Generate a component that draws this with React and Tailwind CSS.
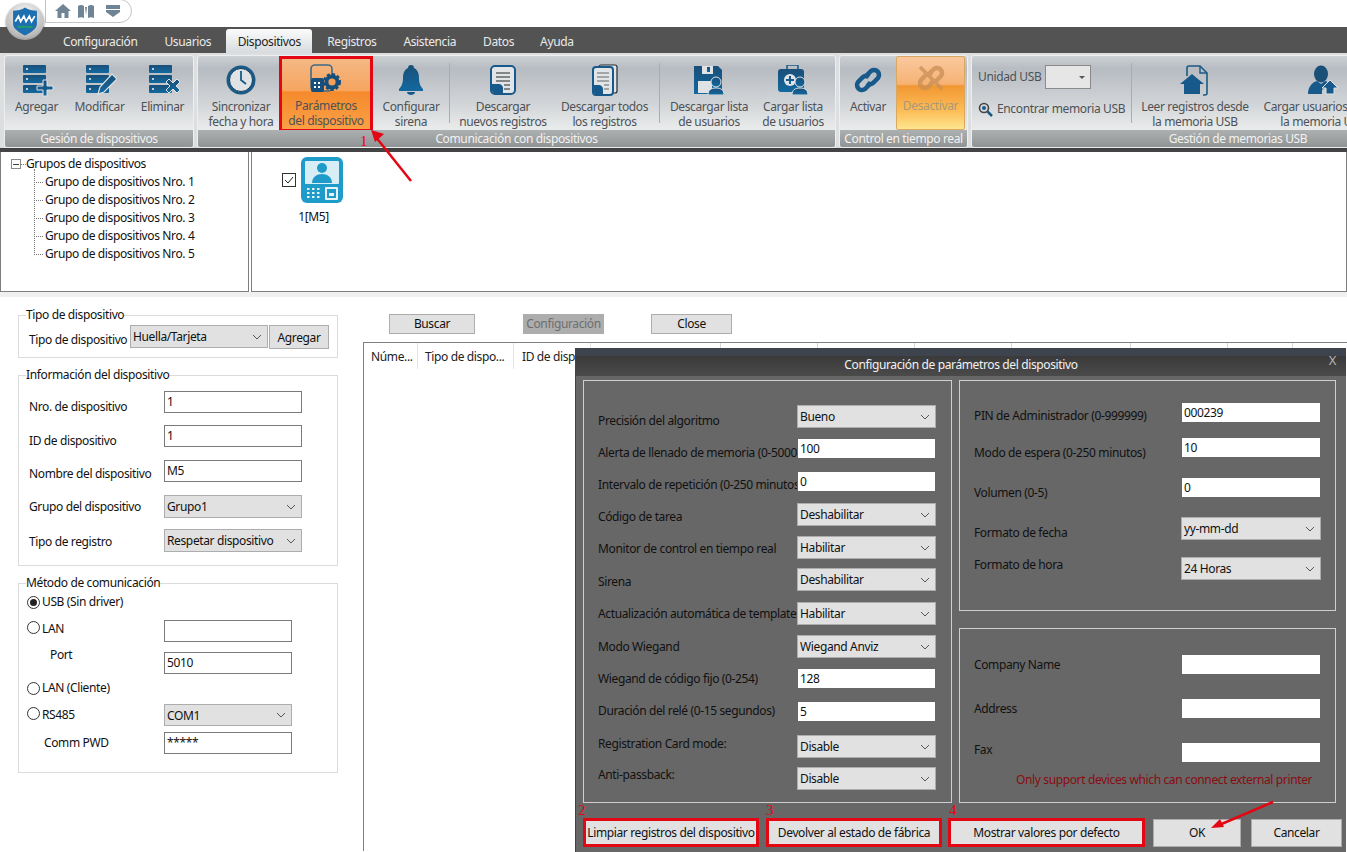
import React from "react";

function Ico({ children, w = 34, h = 34, vb = "0 0 34 34", id }) {
  return (
    <svg width={w} height={h} viewBox={vb}>
      <defs>
        <linearGradient id={id} x1="0" y1="0" x2="0" y2="1">
          <stop offset="0" stopColor="#1a4f78" />
          <stop offset="1" stopColor="#1269a0" />
        </linearGradient>
      </defs>
      <g fill={`url(#${id})`}>{children}</g>
    </svg>
  );
}

function Bars() {
  return (
    <>
      {[2, 12, 22].map((y) => (
        <g key={y}>
          <rect x="3" y={y} width="23" height="8" rx="1" />
          <circle cx="7" cy={y + 4} r="1.1" fill="#e4e8ea" />
        </g>
      ))}
    </>
  );
}

const IAdd = () => (
  <Ico id="ia"><Bars /><path d="M23 17h4v6h6v4h-6v6h-4v-6h-6v-4h6z" stroke="#dfe3e6" strokeWidth="1" /></Ico>
);
const IEdit = () => (
  <Ico id="ib"><Bars /><path d="M15 31l2-7L29 11l5 5-13 13z" stroke="#dfe3e6" strokeWidth="1.2" /></Ico>
);
const IDel = () => (
  <Ico id="ic"><Bars /><path d="M20 19l3-3 4 4 4-4 3 3-4 4 4 4-3 3-4-4-4 4-3-3 4-4z" stroke="#dfe3e6" strokeWidth="1" /></Ico>
);
const IClock = () => (
  <svg width="32" height="32" viewBox="0 0 32 32">
    <circle cx="16" cy="16" r="14.5" fill="#1a5a86" />
    <circle cx="16" cy="16" r="11.5" fill="#dfe3e6" stroke="#0f3d5e" />
    <path d="M16 7v9l5 4" fill="none" stroke="#1a5a86" strokeWidth="1.8" />
  </svg>
);
const IDevSet = () => (
  <svg width="32" height="30" viewBox="0 0 32 30">
    <rect x="1" y="1" width="21" height="26" rx="4" fill="none" stroke="#3f6a88" strokeWidth="1.6" />
    <rect x="1" y="14" width="13" height="14" rx="2" fill="#164f7c" />
    <g fill="#fff"><rect x="4" y="18" width="2" height="2" /><rect x="8" y="18" width="2" height="2" /><rect x="4" y="22" width="2" height="2" /><rect x="8" y="22" width="2" height="2" /></g>
    <circle cx="22" cy="18" r="7.5" fill="#164f7c" stroke="#164f7c" strokeWidth="3" strokeDasharray="3 2" />
    <circle cx="22" cy="18" r="3.6" fill="#f3a05a" />
  </svg>
);
const IBell = () => (
  <Ico id="id" w="26" h="32" vb="0 0 26 32"><path d="M13 1c2 0 3 1 3 3 4 2 5 6 5 10 0 6 2 9 4 11v2H1v-2c2-2 4-5 4-11 0-4 1-8 5-10 0-2 1-3 3-3z" /><path d="M9 28h8c0 2-2 3-4 3s-4-1-4-3z" /></Ico>
);
const IDoc = () => (
  <svg width="28" height="32" viewBox="0 0 28 32">
    <rect x="2" y="2" width="24" height="28" rx="4" fill="#e2e5e7" stroke="#17598a" strokeWidth="2" />
    <path d="M7 9h14M7 13h14M7 17h14M15 21h6M15 25h6" stroke="#666" strokeWidth="1.3" />
    <path d="M2 20h8c2 0 4 2 4 4v6H8c-3 0-6-3-6-6z" fill="#17598a" />
  </svg>
);
const IDocs = () => (
  <svg width="26" height="32" viewBox="0 0 26 32">
    <rect x="7" y="1" width="18" height="28" rx="2" fill="#e2e5e7" stroke="#1e2a33" strokeWidth="1.2" />
    <rect x="1" y="3" width="20" height="28" rx="3" fill="#e2e5e7" stroke="#17598a" strokeWidth="2" />
    <path d="M5 9h12M5 13h12M5 17h12M12 21h5M12 25h5" stroke="#666" strokeWidth="1.2" />
    <path d="M1 21h6c2 0 4 2 4 4v6H6c-3 0-5-3-5-5z" fill="#17598a" />
  </svg>
);
const Person = ({ x, y }) => (
  <g transform={`translate(${x} ${y})`}>
    <circle cx="8" cy="5" r="5" stroke="#dfe3e6" strokeWidth="1" />
    <path d="M0 18c0-5 3-7 8-7s8 2 8 7z" stroke="#dfe3e6" strokeWidth="1" />
  </g>
);
const IFloppy = () => (
  <Ico id="ie" w="30" h="30" vb="0 0 30 30">
    <path d="M0 1h24l4 4v24H0z" />
    <rect x="8" y="1" width="11" height="8" fill="#dfe3e6" /><rect x="13" y="2" width="3" height="5" />
    <rect x="4" y="16" width="14" height="12" fill="#dfe3e6" />
    <Person x="14" y="12" />
  </Ico>
);
const IKit = () => (
  <Ico id="if" w="30" h="30" vb="0 0 30 30">
    <rect x="9" y="0" width="11" height="5" rx="1" fill="none" stroke="#1a5a86" strokeWidth="1.5" />
    <rect x="0" y="4" width="26" height="23" rx="3" />
    <circle cx="12" cy="15" r="6" fill="#dfe3e6" />
    <path d="M11 11h2v3h3v2h-3v3h-2v-3H8v-2h3z" />
    <Person x="14" y="12" />
  </Ico>
);
const ILink = () => (
  <svg width="32" height="32" viewBox="0 0 32 32" fill="none">
    <path d="M13 13l6-6a5 5 0 017 7l-5 5a5 5 0 01-6 0" stroke="#17598a" strokeWidth="4.5" />
    <path d="M19 19l-6 6a5 5 0 01-7-7l5-5a5 5 0 016 0" stroke="#17598a" strokeWidth="4.5" />
  </svg>
);
const IUnlink = () => (
  <svg width="32" height="32" viewBox="0 0 32 32" fill="none" opacity=".75">
    <path d="M13 13l6-6a5 5 0 017 7l-5 5a5 5 0 01-6 0" stroke="#c98f55" strokeWidth="4.5" />
    <path d="M19 19l-6 6a5 5 0 01-7-7l5-5a5 5 0 016 0" stroke="#c98f55" strokeWidth="4.5" />
    <path d="M5 5l22 22" stroke="#c98f55" strokeWidth="3.5" />
  </svg>
);
const IHomeDoc = () => (
  <svg width="30" height="32" viewBox="0 0 30 32" fill="none">
    <path d="M7 12V4c0-1 1-2 2-2h11l7 7v20c0 1-1 2-2 2h-2" stroke="#1a5a86" strokeWidth="1.6" />
    <path d="M20 2v7h7" stroke="#1a5a86" strokeWidth="1.4" />
    <path d="M0 20L12 10l12 10h-4v10H4V20z" fill="#17598a" />
  </svg>
);
const IUserUp = () => (
  <svg width="30" height="30" viewBox="0 0 30 30">
    <ellipse cx="13" cy="9" rx="7" ry="8.5" fill="#1a4f78" />
    <path d="M0 29c0-8 5-12 9-13l4 3 4-3c1 0 3 1 4 3l-7 6v4z" fill="#17598a" />
    <path d="M22 15l8 8h-4v6h-8v-6h-4z" fill="#17598a" stroke="#dfe3e6" />
  </svg>
);

function Chevron() {
  return (
    <svg width="10" height="6" viewBox="0 0 10 6" fill="none">
      <path d="M1 1l4 4 4-4" stroke="#555" strokeWidth="1" />
    </svg>
  );
}

function RibbonBtn({ w, lines, icon, box }) {
  const base = box === "red"
    ? "pt-[2px] h-[76px] border-[3px] border-[#e30613] bg-[linear-gradient(#f5b885_0%,#f6a55f_45%,#f58a2c_47%,#fba045_100%)]"
    : box === "amber"
    ? "pt-[1px] h-[74px] border border-[#d9a860] rounded-[2px] bg-[linear-gradient(#fac89e_0%,#f6b273_38%,#f19733_40%,#fdbd57_75%,#fde58f_100%)]"
    : "pt-[6px] h-[75px]";
  return (
    <div className={`${w} shrink-0 flex flex-col items-center ${base}`}>
      <div className={`flex items-center justify-center ${box === "amber" ? "h-[39px]" : "h-[36px]"}`}>{icon}</div>
      <div className={`text-center leading-[15px] whitespace-nowrap mt-[1px] ${box === "amber" ? "text-[#a99a78]" : "text-[#4d5257]"}`}>
        {lines.map((l) => <div key={l}>{l}</div>)}
      </div>
    </div>
  );
}

function Sep() {
  return <div className="w-px h-[60px] mt-[7px] bg-[#a9adb1] shrink-0" />;
}

function Group({ w, caption, children }) {
  return (
    <div className={`${w} shrink-0 h-[93px] flex flex-col rounded-[3px] overflow-hidden border border-[#eceeef] bg-[linear-gradient(#cdd1d5_0%,#b7bcc2_14%,#d0d3d6_50%,#e9ebeb_80%)]`}>
      <div className="flex h-[74px]">{children}</div>
      <div className="h-[18px] leading-[18px] text-center text-[#f2f2f2] bg-[linear-gradient(#adb0b0,#8f9292)] whitespace-nowrap">{caption}</div>
    </div>
  );
}

function Tab({ label, ml, active }) {
  return active ? (
    <div className={`${ml} h-[24px] w-[86px] text-center rounded-t-[3px] leading-[25px] text-[#222] bg-[linear-gradient(#fbfbfb,#d7dbde)]`}>{label}</div>
  ) : (
    <div className={`${ml} h-[24px] leading-[25px] text-[#eaeaea]`}>{label}</div>
  );
}

function Input({ w = "w-[138px]", v = "", h = "h-[22px]", dark }) {
  return (
    <div className={`${w} ${h} shrink-0 bg-white border ${dark ? "border-[#666]" : "border-[#7a7a7a]"} leading-[19px] pl-[2px] text-[#111]`}>{v}</div>
  );
}

function Select({ w = "w-[138px]", v, h = "h-[23px]" }) {
  return (
    <div className={`${w} ${h} shrink-0 bg-[#e1e1e1] border border-[#adadad] flex items-center justify-between pl-[2px] pr-[5px] text-[#111]`}>
      <span className="mt-[1px]">{v}</span>
      <Chevron />
    </div>
  );
}

function Radio({ on }) {
  return (
    <span className="w-[13px] h-[13px] rounded-full border border-[#333] bg-white flex items-center justify-center shrink-0">
      {on && <span className="w-[7px] h-[7px] rounded-full bg-[#222]" />}
    </span>
  );
}

function Btn({ w, label, disabled }) {
  return (
    <div className={`${w} h-[20px] border text-center leading-[18px] ${disabled ? "bg-[#adadad] border-[#adadad] text-[#6e6e6e]" : "bg-[#e1e1e1] border-[#adadad] text-[#111]"}`}>{label}</div>
  );
}

const leftRows = [
  { h: "h-[33px]", mt: "mt-[8px]", l: "Precisión del algoritmo", s: "Bueno" },
  { h: "h-[33px]", mt: "mt-[7px]", l: "Alerta de llenado de memoria (0-5000)", i: "100" },
  { h: "h-[32px]", mt: "mt-[6px]", l: "Intervalo de repetición (0-250 minutos)", i: "0" },
  { h: "h-[33px]", mt: "mt-[6px]", l: "Código de tarea", s: "Deshabilitar" },
  { h: "h-[32px]", mt: "mt-[5px]", l: "Monitor de control en tiempo real", s: "Habilitar" },
  { h: "h-[34px]", mt: "mt-[6px]", l: "Sirena", s: "Deshabilitar" },
  { h: "h-[33px]", mt: "mt-[4px]", l: "Actualización automática de templates", s: "Habilitar" },
  { h: "h-[33px]", mt: "mt-[4px]", l: "Modo Wiegand", s: "Wiegand Anviz" },
  { h: "h-[33px]", mt: "mt-[3px]", l: "Wiegand de código fijo (0-254)", i: "128" },
  { h: "h-[34px]", mt: "mt-[2px]", l: "Duración del relé (0-15 segundos)", i: "5" },
  { h: "h-[32px]", mt: "mt-[1px]", l: "Registration Card mode:", s: "Disable" },
  { h: "h-[30px]", mt: "mt-[0px]", l: "Anti-passback:", s: "Disable" },
];

const rightRows = [
  { h: "h-[35px]", mt: "mt-[6px]", l: "PIN de Administrador (0-999999)", i: "000239" },
  { h: "h-[40px]", mt: "mt-[8px]", l: "Modo de espera (0-250 minutos)", i: "10" },
  { h: "h-[40px]", mt: "mt-[8px]", l: "Volumen (0-5)", i: "0" },
  { h: "h-[40px]", mt: "mt-[8px]", l: "Formato de fecha", s: "yy-mm-dd" },
  { h: "h-[30px]", mt: "mt-[0px]", l: "Formato de hora", s: "24 Horas" },
];

const printRows = [
  { h: "h-[44px]", mt: "mt-[3px]", l: "Company Name" },
  { h: "h-[44px]", mt: "mt-[3px]", l: "Address" },
  { h: "h-[28px]", mt: "mt-[0px]", l: "Fax" },
];

const extraCols = ["w-[130px]", "w-[97px]", "w-[97px]", "w-[97px]", "w-[119px]", "w-[97px]", "w-[65px]"];

function DlgRow({ r, labelW, inW }) {
  return (
    <div className={`${r.h} flex shrink-0`}>
      <div className={`${labelW} shrink-0 overflow-hidden whitespace-nowrap text-[#111] ${r.mt}`}>{r.l}</div>
      {r.s ? <Select w={inW} v={r.s} /> : <Input v={r.i ?? ""} dark h="h-[21px]" w={inW} />}
    </div>
  );
}

function RedBtn({ w, label, ml = "" }) {
  return (
    <div className={`${w} ${ml} h-[29px] border-[3px] border-[#e30613] bg-[#e1e1e1] text-center leading-[23px] text-[#111] whitespace-nowrap`}>{label}</div>
  );
}

function Form({ className, legend, children }) {
  return (
    <fieldset className={`${className} border border-[#dcdcdc] pl-[10px] relative`}>
      <legend className="-ml-[3px] leading-[16px] text-[#111]">{legend}</legend>
      {children}
    </fieldset>
  );
}

function FormRow({ label, h, children, mt = "" }) {
  return (
    <div className={`flex ${h}`}>
      <div className={`w-[135px] shrink-0 text-[#111] whitespace-nowrap ${mt}`}>{label}</div>
      {children}
    </div>
  );
}

export default function App() {
  return (
    <div className="relative w-[1347px] h-[852px] overflow-hidden bg-white text-[12px] leading-[16px] font-['Noto_Sans','Open_Sans',sans-serif] tracking-[-0.37px]">
      {/* quick access */}
      <div className="h-[27px] flex">
        <div className="ml-[45px] w-[87px] h-[24px] -mt-[1px] border border-[#c4c4c4] rounded-r-[12px] flex items-center pl-[9px] gap-[7px]">
          <svg width="16" height="14" viewBox="0 0 16 14"><path d="M8 0L0 7h2.5v7h4V9h3v5h4V7H16z" fill="#6f8494" /></svg>
          <svg width="16" height="14" viewBox="0 0 16 14"><path d="M0 2c2-1.500 4-1.500 6 0v12c-2-1-4-1-6 0zM10 2c2-1.500 4-1.500 6 0v12c-2-1-4-1-6 0zM7 3h2l-1 8z" fill="#6f8494" /></svg>
          <svg width="14" height="12" className="ml-[5px]" viewBox="0 0 14 12"><path d="M0 0h14v4H0zM0 5h14v2l-7 5-7-5z" fill="#6f8494" /></svg>
        </div>
      </div>

      {/* logo */}
      <div className="absolute left-[6px] top-[3px] w-[38px] h-[37px] rounded-full bg-[radial-gradient(circle_at_50%_30%,#fafafa,#b9b9b9_70%,#6e6e6e)] flex items-center justify-center shadow-[0_1px_2px_#555]">
        <svg width="26" height="29" viewBox="0 0 24 26">
          <path d="M1 3c4 0 8-1 11-3 3 2 7 3 11 3v12c0 5-6 8-11 11C7 23 1 20 1 15z" fill="#1e6fb0" />
          <path d="M3 13l3-5 2 5 3-5 2 5 3-5 2 5 3-5" stroke="#fff" strokeWidth="1.6" fill="none" />
          <path d="M5 17h14v2H5z" fill="#1d9b6c" />
        </svg>
      </div>

      {/* tabs */}
      <div className="h-[26px] bg-[#535353] flex items-end">
        <Tab ml="ml-[63px]" label="Configuración" />
        <Tab ml="ml-[27px]" label="Usuarios" />
        <Tab ml="ml-[15px]" label="Dispositivos" active />
        <Tab ml="ml-[15px]" label="Registros" />
        <Tab ml="ml-[27px]" label="Asistencia" />
        <Tab ml="ml-[27px]" label="Datos" />
        <Tab ml="ml-[26px]" label="Ayuda" />
      </div>

      {/* ribbon */}
      <div className="h-[96px] bg-[#dcdee0] flex gap-[3px] pl-[4px] pt-[2px] overflow-hidden border-b-[1px] border-[#3d3d3d]">
        <Group w="w-[190px]" caption="Gesión de dispositivos">
          <RibbonBtn w="w-[63px]" lines={["Agregar"]} icon={<IAdd />} />
          <RibbonBtn w="w-[63px]" lines={["Modificar"]} icon={<IEdit />} />
          <RibbonBtn w="w-[63px]" lines={["Eliminar"]} icon={<IDel />} />
        </Group>
        <Group w="w-[639px]" caption="Comunicación con dispositivos">
          <div className="w-[5px] shrink-0" />
          <RibbonBtn w="w-[76px]" lines={["Sincronizar", "fecha y hora"]} icon={<IClock />} />
          <RibbonBtn w="w-[94px]" lines={["Parámetros", "del dispositivo"]} icon={<IDevSet />} box="red" />
          <RibbonBtn w="w-[76px]" lines={["Configurar", "sirena"]} icon={<IBell />} />
          <Sep />
          <RibbonBtn w="w-[106px]" lines={["Descargar", "nuevos registros"]} icon={<IDoc />} />
          <RibbonBtn w="w-[97px]" lines={["Descargar todos", "los registros"]} icon={<IDocs />} />
          <div className="w-[6px] shrink-0" />
          <Sep />
          <RibbonBtn w="w-[98px]" lines={["Descargar lista", "de usuarios"]} icon={<IFloppy />} />
          <RibbonBtn w="w-[70px]" lines={["Cargar lista", "de usuarios"]} icon={<IKit />} />
        </Group>
        <Group w="w-[129px]" caption="Control en tiempo real">
          <RibbonBtn w="w-[56px]" lines={["Activar"]} icon={<ILink />} />
          <RibbonBtn w="w-[69px]" lines={["Desactivar"]} icon={<IUnlink />} box="amber" />
        </Group>
        <Group w="w-[534px]" caption="Gestión de memorias USB">
          <div className="w-[159px] shrink-0 pl-[6px] pt-[9px] text-[#4d5257]">
            <div className="flex items-center h-[24px]">
              <span className="w-[67px] shrink-0">Unidad USB</span>
              <div className="w-[46px] h-[24px] border border-[#8a8a8a] bg-[#e6e6e6] flex items-center justify-end pr-[5px]">
                <svg width="6" height="3" viewBox="0 0 6 3"><path d="M0 0h6L3 3z" fill="#555" /></svg>
              </div>
            </div>
            <div className="flex items-center gap-[4px] mt-[12px] whitespace-nowrap">
              <svg width="15" height="15" viewBox="0 0 15 15" fill="none"><circle cx="6" cy="6" r="4.500" stroke="#444" strokeWidth="1.600" /><circle cx="6" cy="6" r="2" fill="#1a5a86" /><path d="M9.500 9.500L14 14" stroke="#1a5a86" strokeWidth="2.500" /></svg>
              <span>Encontrar memoria USB</span>
            </div>
          </div>
          <Sep />
          <RibbonBtn w="w-[126px]" lines={["Leer registros desde", "la memoria USB"]} icon={<IHomeDoc />} />
          <RibbonBtn w="w-[130px]" lines={["Cargar usuarios desde", "la memoria USB"]} icon={<IUserUp />} />
        </Group>
      </div>
      <div className="h-[3px] bg-[#444]" />

      {/* device panels */}
      <div className="h-[140px] flex gap-[2px]">
        <div className="w-[249px] shrink-0 border border-[#7f7f7f] border-t-0 pl-[10px] pt-[3px] text-[#111] relative">
          <div className="flex items-center h-[18px]">
            <span className="w-[10px] h-[10px] border border-[#8a8a8a] flex items-center justify-center">
              <span className="w-[6px] h-px bg-[#444]" />
            </span>
            <span className="w-[5px] border-t border-dotted border-[#777]" />
            <span>Grupos de dispositivos</span>
          </div>
          {[1, 2, 3, 4, 5].map((n) => (
            <div key={n} className="flex items-center h-[18px] ml-[23px]">
              <span className="w-[9px] border-t border-dotted border-[#777] mr-[2px]" />
              <span>Grupo de dispositivos Nro. {n}</span>
            </div>
          ))}
          <div className="absolute left-[33px] top-[17px] h-[84px] border-l border-dotted border-[#777]" />
        </div>
        <div className="flex-1 border border-[#7f7f7f] border-t-0 flex">
          <div className="ml-[30px] mt-[21px] w-[14px] h-[14px] border border-[#333] flex items-center justify-center shrink-0">
            <svg width="10" height="8" viewBox="0 0 10 8" fill="none"><path d="M1 4l3 3 5-6" stroke="#222" /></svg>
          </div>
          <div className="-ml-[2px] flex flex-col items-center">
            <svg width="56" height="46" viewBox="0 0 56 46" className="mt-[5px]">
              <rect x="7" y="0" width="42" height="46" rx="6" fill="#1f9bc9" />
              <rect x="11" y="4" width="34" height="23" rx="1" fill="#d8eef6" />
              <circle cx="28" cy="11" r="5" fill="#1f9bc9" />
              <path d="M18 26c0-6 5-9 10-9s10 3 10 9z" fill="#1f9bc9" />
              <g fill="#e6f4fa">
                {[0, 1, 2].map((r) => [0, 1, 2].map((c) => <rect key={`${r}${c}`} x={13 + c * 5} y={31 + r * 4} width="2.5" height="2" />))}
                <rect x="31" y="30" width="13" height="13" rx="1" />
              </g>
              <rect x="33" y="32" width="9" height="9" fill="#1f9bc9" />
              <rect x="35" y="36" width="5" height="3" fill="#e6f4fa" />
            </svg>
            <div className="text-[#111] mt-[6px] pr-[17px]">1[M5]</div>
          </div>
        </div>
      </div>
      <div className="h-[5px] bg-[#f0f0f0]" />

      {/* lower */}
      <div className="flex h-[554px]">
        <div className="w-[363px] shrink-0 pl-[18px] pt-[10px]">
          <Form className="w-[320px] h-[51px]" legend="Tipo de dispositivo">
            <div className="flex pt-[2px]">
              <span className="w-[101px] shrink-0 mt-[7px] text-[#111] whitespace-nowrap">Tipo de dispositivo</span>
              <Select w="w-[138px]" v="Huella/Tarjeta" />
              <div className="ml-[1px] w-[60px] h-[24px] bg-[#e1e1e1] border border-[#adadad] text-center leading-[23px] text-[#111]">Agregar</div>
            </div>
          </Form>
          <Form className="w-[320px] h-[199px] mt-[9px]" legend="Información del dispositivo">
            <div className="pt-[8px]">
              <FormRow label="Nro. de dispositivo" h="h-[34px]" mt="mt-[8px]"><Input v="1" /></FormRow>
              <FormRow label="ID de dispositivo" h="h-[35px]" mt="mt-[8px]"><Input v="1" /></FormRow>
              <FormRow label="Nombre del dispositivo" h="h-[35px]" mt="mt-[6px]"><Input v="M5" /></FormRow>
              <FormRow label="Grupo del dispositivo" h="h-[34px]" mt="mt-[4px]"><Select v="Grupo1" /></FormRow>
              <FormRow label="Tipo de registro" h="h-[30px]" mt="mt-[5px]"><Select v="Respetar dispositivo" /></FormRow>
            </div>
          </Form>
          <Form className="w-[320px] h-[198px] mt-[9px]" legend="Método de comunicación">
            <div className="flex flex-col">
              <div className="flex items-center h-[22px] -ml-[2px] gap-[2px] text-[#111]"><Radio on />USB (Sin driver)</div>
              <div className="flex h-[32px] mt-[7px]">
                <div className="w-[137px] -ml-[2px] shrink-0 flex items-start gap-[2px] mt-[1px] text-[#111]"><Radio />LAN</div>
                <Input w="w-[128px]" />
              </div>
              <div className="flex h-[27px]">
                <div className="w-[135px] pl-[21px] shrink-0 mt-[-5px] text-[#111]">Port</div>
                <Input w="w-[128px]" v="5010" />
              </div>
              <div className="flex items-center h-[18px] -ml-[2px] gap-[2px] text-[#111]"><Radio />LAN (Cliente)</div>
              <div className="flex h-[27px] mt-[7px]">
                <div className="w-[137px] -ml-[2px] shrink-0 flex items-start gap-[2px] mt-[3px] text-[#111]"><Radio />RS485</div>
                <Select w="w-[128px]" h="h-[22px]" v="COM1" />
              </div>
              <div className="flex h-[24px] mt-[1px]">
                <div className="w-[135px] pl-[15px] shrink-0 mt-[3px] text-[#111]">Comm PWD</div>
                <Input w="w-[128px]" v="*****" />
              </div>
            </div>
          </Form>
        </div>
        <div className="flex-1 min-w-0">
          <div className="flex h-[45px] pt-[17px] pl-[26px]">
            <Btn w="w-[86px]" label="Buscar" />
            <div className="ml-[48px]"><Btn w="w-[81px]" label="Configuración" disabled /></div>
            <div className="ml-[47px]"><Btn w="w-[81px]" label="Close" /></div>
          </div>
          <div className="h-[509px] border-l border-t border-[#808080] flex items-start text-[#222]">
            <div className="w-[54px] h-[26px] shrink-0 border-r border-[#e4e4e4] pl-[7px] leading-[27px]">Núme...</div>
            <div className="w-[96px] h-[26px] shrink-0 border-r border-[#e4e4e4] pl-[7px] leading-[27px] whitespace-nowrap">Tipo de dispo...</div>
            <div className="w-[77px] h-[26px] shrink-0 border-r border-[#e4e4e4] pl-[8px] leading-[27px] whitespace-nowrap">ID de dispositivo</div>
            {extraCols.map((c, i) => <div key={i} className={`${c} h-[26px] shrink-0 border-r border-[#d8d8d8]`} />)}
          </div>
        </div>
      </div>

      {/* dialog */}
      <div className="absolute left-[575px] top-[348px] w-[771px] h-[504px] bg-[#676767] flex flex-col border-l border-[#3d444e]">
        <div className="h-[28px] shrink-0 border-t-[8px] border-[#3d444e] bg-[linear-gradient(#3a3a3a,#4a4a4a)] relative">
          <div className="absolute inset-x-0 top-0 text-center leading-[18px] text-[#f2f2f2]">Configuración de parámetros del dispositivo</div>
          <div className="absolute right-[10px] -top-[4px] text-[#b5b5b5] text-[13px]">X</div>
        </div>
        <div className="flex pt-[4px] pl-[7px] gap-[7px]">
          <div className="w-[369px] h-[423px] shrink-0 border border-[#cfcfcf] pl-[14px] pt-[24px] flex flex-col">
            {leftRows.map((r) => <DlgRow key={r.l} r={r} labelW="w-[199px]" inW="w-[139px]" />)}
          </div>
          <div className="w-[377px] shrink-0 flex flex-col gap-[17px]">
            <div className="h-[231px] border border-[#cfcfcf] pl-[14px] pr-[14px] pt-[21px] flex flex-col">
              {rightRows.map((r) => <DlgRow key={r.l} r={r} labelW="w-[207px]" inW="w-[140px]" />)}
            </div>
            <div className="h-[175px] border border-[#cfcfcf] pl-[14px] pt-[25px] flex flex-col relative">
              {printRows.map((r) => <DlgRow key={r.l} r={r} labelW="w-[207px]" inW="w-[140px]" />)}
              <div className="mt-[2px] ml-[42px] text-[#8a0c12] whitespace-nowrap">Only support devices which can connect external printer</div>
            </div>
          </div>
        </div>
        <div className="flex pl-[7px] mt-[15px]">
          <RedBtn w="w-[176px]" label="Limpiar registros del dispositivo" />
          <RedBtn w="w-[176px]" ml="ml-[7px]" label="Devolver al estado de fábrica" />
          <RedBtn w="w-[197px]" ml="ml-[6px]" label="Mostrar valores por defecto" />
          <div className="ml-[8px] w-[88px] h-[28px] mt-[1px] bg-[#e1e1e1] border border-[#adadad] text-center leading-[26px] text-[#111]">OK</div>
          <div className="ml-[10px] w-[91px] h-[28px] mt-[1px] bg-[#e1e1e1] border border-[#adadad] text-center leading-[26px] text-[#111]">Cancelar</div>
        </div>
      </div>

      {/* annotations */}
      <svg className="absolute left-0 top-0 pointer-events-none" width="1347" height="852" fill="none">
        <path d="M411 181L375 136" stroke="#e30613" strokeWidth="2.5" />
        <path d="M371 130l13 4-9 8z" fill="#e30613" />
        <path d="M1273 802l-56 24" stroke="#e30613" strokeWidth="2.5" />
        <path d="M1211 828l9-9 4 8z" fill="#e30613" />
      </svg>
      <span className="absolute left-[360px] top-[133px] font-['Liberation_Serif',serif] text-[15px] text-[#e30613]">1</span>
      <span className="absolute left-[578px] top-[802px] font-['Liberation_Serif',serif] text-[15px] text-[#e30613]">2</span>
      <span className="absolute left-[766px] top-[802px] font-['Liberation_Serif',serif] text-[15px] text-[#e30613]">3</span>
      <span className="absolute left-[949px] top-[802px] font-['Liberation_Serif',serif] text-[15px] text-[#e30613]">4</span>
    </div>
  );
}
